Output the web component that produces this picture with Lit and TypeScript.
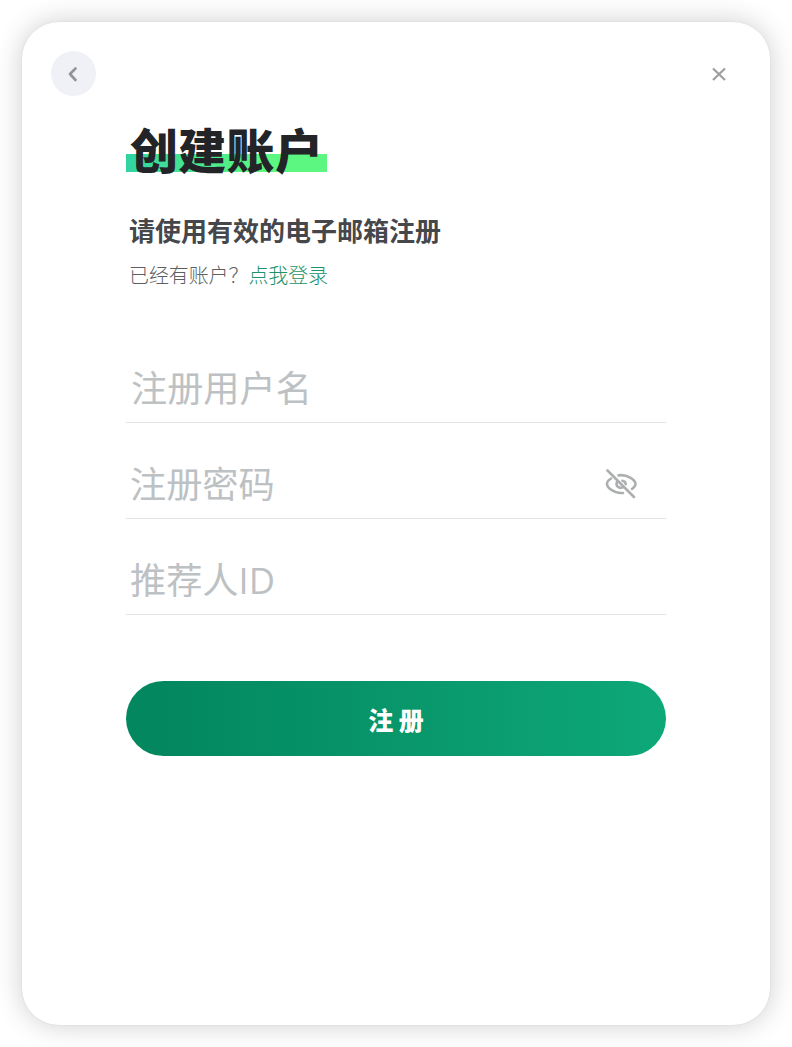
import { LitElement, html, css } from "lit";
import { customElement, property } from "lit/decorators.js";

@customElement("form-field")
class FormField extends LitElement {
  @property() label = "";
  @property() type = "text";

  static styles = css`
    :host { display: block; }
    .row {
      box-sizing: border-box;
      display: flex;
      align-items: center;
      height: 96px;
      padding: 26px 29px 0 var(--field-inset, 4px);
      border-bottom: 1px solid #e3e5e5;
    }
    input {
      flex: 1;
      min-width: 0;
      height: 64px;
      padding: 0;
      box-sizing: border-box;
      border: 0;
      outline: 0;
      background: transparent;
      color: #45494d;
      font: 400 36.2px "Open Sans", "Noto Sans CJK SC", sans-serif;
    }
    input::placeholder { color: #bdc1c3; opacity: 1; }
  `;

  render() {
    return html`<div class="row">
      <input type=${this.type} placeholder=${this.label} aria-label=${this.label} />
      <slot></slot>
    </div>`;
  }
}

@customElement("app-root")
class AppRoot extends LitElement {
  static styles = css`
    :host {
      display: block;
      box-sizing: border-box;
      height: 1047px;
      padding: 22px;
      overflow: hidden;
      background: #fff;
      font-family: "Noto Sans CJK SC", sans-serif;
    }
    .card {
      box-sizing: border-box;
      width: 748px;
      height: 1003px;
      padding: 29px 29px 0;
      border-radius: 37px;
      background: #fff;
      box-shadow: 0 0 2px rgba(0, 0, 0, 0.08), 0 0 28px rgba(0, 0, 0, 0.2);
    }
    .bar { display: flex; justify-content: space-between; height: 45px; }
    button { padding: 0; border: 0; background: none; }
    svg { display: block; }
    .back { width: 45px; height: 45px; border-radius: 50%; background: #f0f0f7; }
    .close { width: 45px; height: 45px; }
    .content { padding: 26px 75px 0; }
    h1 {
      width: 201px;
      height: 50px;
      margin: 0;
      box-sizing: border-box;
      padding-left: 4px;
      background: linear-gradient(90deg, #32d3a3, #5bf781 65%) 0 100% / 201px 18px no-repeat;
      color: #222427;
      font-size: 48px;
      font-weight: 900;
      line-height: 52px;
      letter-spacing: 0.3px;
      white-space: nowrap;
    }
    h2 {
      margin: 38px 0 0 3px;
      color: #45474b;
      font-size: 26px;
      font-weight: 700;
      line-height: 40px;
    }
    p {
      margin: 10px 0 0 3px;
      color: #5d5f61;
      font-size: 20px;
      font-weight: 300;
      line-height: 30px;
      letter-spacing: -0.1px;
    }
    a { color: #1c916a; text-decoration: none; }
    .fields { margin-top: 37px; }
    .username { --field-inset: 5px; }
    .submit {
      display: block;
      width: 540px;
      height: 75px;
      margin-top: 66px;
      border-radius: 38px;
      background: linear-gradient(90deg, #03875e 6%, #0ea878);
      color: #fff;
      font: 900 25px "Noto Sans CJK SC", sans-serif;
    }
  `;

  render() {
    return html`<main class="card">
      <div class="bar">
        <button class="back" aria-label="返回">
          <svg width="45" height="45" fill="none" stroke="#929398" stroke-width="2.6" stroke-linecap="round" stroke-linejoin="round"><path d="M24.500 17.500 19 23l5.500 6" /></svg>
        </button>
        <button class="close" aria-label="关闭">
          <svg width="45" height="45" fill="none" stroke="#9c9e9f" stroke-width="2.2"><path d="m17 17.500 12 11.500m0-11.500-12 11.500" /></svg>
        </button>
      </div>
      <div class="content">
        <h1>创建账户</h1>
        <h2>请使用有效的电子邮箱注册</h2>
        <p>已经有账户？<a>点我登录</a></p>
        <div class="fields">
          <form-field class="username" label="注册用户名"></form-field>
          <form-field label="注册密码" type="password">
            <svg width="32" height="30" fill="none" stroke="#acaeb0" stroke-width="2.6" stroke-linecap="round">
              <path d="M2.500 1.500 29 28" />
              <path d="M6 9.500C3.500 11 2 13.500 2 15c0 3.500 6.500 9 14 9h2" />
              <path d="M13.500 6.400C22 5 30.500 11 30.500 15c0 1.500-1.500 3.500-3.500 5" />
              <path d="M12.500 12c-3 5 2 8.500 6 6" />
              <path d="M17.500 11.800c2 .5 3 1.500 3.200 3.300" />
            </svg>
          </form-field>
          <form-field label="推荐人ID"></form-field>
        </div>
        <button class="submit">注 册</button>
      </div>
    </main>`;
  }
}
